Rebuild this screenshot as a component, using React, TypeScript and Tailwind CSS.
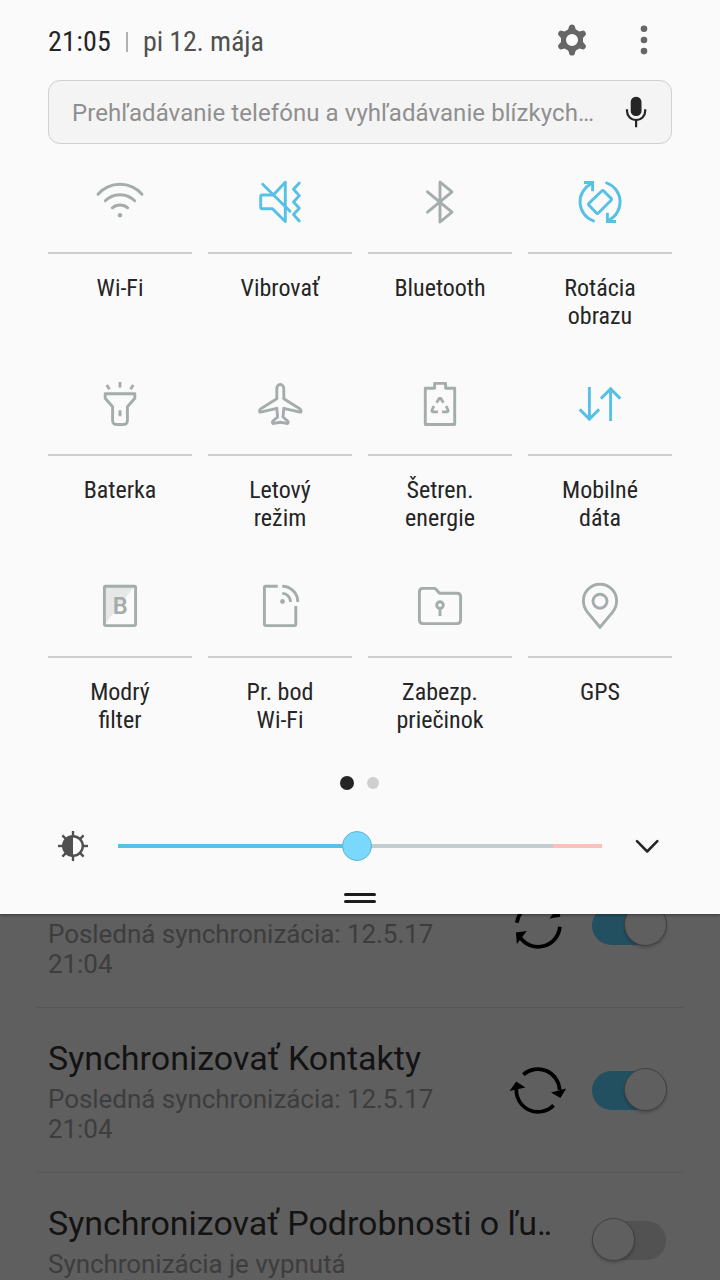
import React from "react";
import clsx from "clsx";

type Tile = {
  id: string;
  lines: string[];
  active?: boolean;
  icon: React.ReactNode;
};

type SyncRow = {
  id: string;
  title?: string;
  truncated?: boolean;
  status: string[];
  on: boolean;
  syncing?: boolean;
  turned?: boolean;
};

const tiles: Tile[] = [
  {
    id: "wifi",
    lines: ["Wi-Fi"],
    icon: (
      <>
        <path d="M2 16.3a29 29 0 0 1 44 0M9.3 22.7a21 21 0 0 1 29.4 0M16.3 29.9a11.5 11.5 0 0 1 15.4 0" />
        <circle cx="24" cy="37.3" r="2.2" fill="currentColor" stroke="none" />
      </>
    ),
  },
  {
    id: "vibrate",
    lines: ["Vibrovať"],
    active: true,
    icon: (
      <>
        <path d="M17.3 17H6.2Q4.7 17 4.7 18.5V29.2Q4.7 30.7 6.2 30.7H16.4L29.3 43.5V4.3L17.3 17" />
        <path d="M6.7 6.2L34 33.2" />
        <path d="M43.3 5L37.5 11.2L43.3 17.6L37.5 24L43.3 30.3L37.5 36.6L43.3 43" />
      </>
    ),
  },
  {
    id: "bluetooth",
    lines: ["Bluetooth"],
    icon: <path d="M11.5 13.8L36 34.2L24 44V4L36 13.8L11.5 34.2" />,
  },
  {
    id: "rotate",
    lines: ["Rotácia", "obrazu"],
    active: true,
    icon: (
      <>
        <path d="M17.6 43A20.2 20.2 0 0 1 15.3 5.8" />
        <path d="M30.7 5A20.2 20.2 0 0 1 32.7 42.2" />
        <path d="M8 4.5H16.6V13.3" strokeLinecap="butt" strokeLinejoin="miter" />
        <path d="M40 43.5H31.4V34.7" strokeLinecap="butt" strokeLinejoin="miter" />
        <path d="M12 4H17V9ZM36 44H31V39Z" fill="currentColor" stroke="none" />
        <path d="M27.7 13L35.1 20.4Q36 21.3 35.1 22.2L22.4 35Q21.4 36 20.4 35L13 27.2Q12.1 26.2 13 25.3L25.8 13Q26.8 12.1 27.7 13Z" />
      </>
    ),
  },
  {
    id: "torch",
    lines: ["Baterka"],
    icon: (
      <>
        <path d="M9.2 13.7H38.8V18.2L31.4 26.8V40.2Q31.4 44.5 27.1 44.5H20.9Q16.6 44.5 16.6 40.2V26.8L9.2 18.2Z" />
        <path d="M24 30.2V36.2M24 2V7.6M10.7 5L13.5 9.2M37.3 5L34.5 9.2" strokeLinecap="butt" />
      </>
    ),
  },
  {
    id: "airplane",
    lines: ["Letový", "režim"],
    icon: (
      <path d="M24.3 4.5C22.2 4.5 20.8 6.4 20.8 9V18.8L5.2 28.4C3.4 29.6 2.9 32.4 4.6 32.1L20.8 28.3L21.6 37L17.2 40.8C15.9 42 16.3 43.9 18 43.4L24.3 42.3L30.6 43.4C32.3 43.9 32.7 42 31.4 40.8L27 37L27.8 28.3L44 32.1C45.7 32.4 45.2 29.6 43.4 28.4L27.8 18.8V9C27.8 6.4 26.4 4.5 24.3 4.5Z" />
    ),
  },
  {
    id: "power",
    lines: ["Šetren.", "energie"],
    icon: (
      <>
        <path d="M9.3 8.3H18.6V3.4H29.6V8.3H38.7V44.5H9.3Z" />
        <path d="M20.6 22.8L23.1 18.5H24.9L27.4 22.8M30.1 26L32 30Q32.4 31.9 30.8 31.9H26M22 31.9H17.2Q15.6 31.9 16 30L17.9 26" strokeWidth="2.8" strokeLinecap="butt" />
      </>
    ),
  },
  {
    id: "data",
    lines: ["Mobilné", "dáta"],
    active: true,
    icon: (
      <path d="M13.4 7V39.3M3.7 29.4L13.4 39.1L23.1 29.4M34.6 41V8.7M24.9 18.6L34.6 8.9L44.3 18.6" strokeLinecap="butt" strokeLinejoin="miter" />
    ),
  },
  {
    id: "blue-filter",
    lines: ["Modrý", "filter"],
    icon: (
      <>
        <path d="M9 5H38L9 42Z" fill="#e6e8e8" stroke="none" />
        <rect x="8.4" y="4.2" width="31.2" height="39.4" rx="1" />
        <text x="24.3" y="32.2" fontSize="23.5" fontWeight="600" textAnchor="middle" fill="currentColor" stroke="none">B</text>
      </>
    ),
  },
  {
    id: "hotspot",
    lines: ["Pr. bod", "Wi-Fi"],
    icon: (
      <>
        <path d="M21.8 4.2H9.4Q8.4 4.2 8.4 5.2V42.6Q8.4 43.6 9.4 43.6H38.8Q39.8 43.6 39.8 42.6V24M26.3 4.2A15.6 15.6 0 0 1 41.8 20M26.3 11.4A8.4 8.4 0 0 1 34.6 20" strokeLinecap="butt" />
        <circle cx="26.5" cy="19.5" r="2.4" fill="currentColor" stroke="none" />
      </>
    ),
  },
  {
    id: "folder",
    lines: ["Zabezp.", "priečinok"],
    icon: (
      <>
        <path d="M7 6.4H18.3Q19.3 6.4 20 7.2L23.5 11.2H41Q44.6 11.2 44.6 14.8V38Q44.6 41.6 41 41.6H7Q3.4 41.6 3.4 38V10Q3.4 6.4 7 6.4Z" />
        <circle cx="24" cy="23.1" r="3.3" />
        <path d="M24 26.4V34" strokeLinecap="butt" />
      </>
    ),
  },
  {
    id: "gps",
    lines: ["GPS"],
    icon: (
      <>
        <path d="M24 45.2L11.4 30.2C8.9 27 7.4 23.5 7.4 18.8A16.6 16.6 0 0 1 40.6 18.8C40.6 23.5 39.1 27 36.6 30.2Z" strokeLinejoin="miter" />
        <circle cx="24" cy="19.2" r="7" />
      </>
    ),
  },
];

// the first row is scrolled under the panel, only its status stays visible
const syncRows: SyncRow[] = [
  {
    id: "scrolled",
    status: ["Posledná synchronizácia: 12.5.17", "21:04"],
    on: true,
    syncing: true,
    turned: true,
  },
  {
    id: "contacts",
    title: "Synchronizovať Kontakty",
    status: ["Posledná synchronizácia: 12.5.17", "21:04"],
    on: true,
    syncing: true,
  },
  {
    id: "people",
    title: "Synchronizovať Podrobnosti o ľu",
    truncated: true,
    status: ["Synchronizácia je vypnutá"],
    on: false,
  },
];

const gearTeeth = [0, 60, 120, 180, 240, 300];
const sunRays = [0, 45, 90, 135, 180, 225, 270, 315];

const Header: React.FC = () => (
  <header className="flex h-20 items-center pt-1 pr-[72px] pl-12">
    <div className="flex flex-1 items-center font-['Roboto_Condensed','Roboto',sans-serif] text-[28px] leading-none [font-stretch:75%]">
      <span className="w-[63px] tracking-[0.25px] text-[#252525]">21:05</span>
      <span className="mx-[15px] h-5 w-[2px] bg-[#b0b0b0]" />
      <span className="tracking-[-0.15px] text-[#505050]">pi 12. mája</span>
    </div>
    <svg viewBox="0 0 32 32" className="-mt-1 mr-[52px] size-8 text-[#666]">
      <circle cx="16" cy="16" r="8.5" fill="none" stroke="currentColor" strokeWidth="5" />
      {gearTeeth.map((deg) => (
        <path key={deg} d="M9.8 7.6Q12.6 6.4 13.1 2.6Q13.5 0.4 16 0.4T18.9 2.6Q19.4 6.4 22.2 7.6L20 9H12Z" fill="currentColor" transform={`rotate(${deg} 16 16)`} />
      ))}
    </svg>
    <svg viewBox="0 0 8 32" className="-mt-1 h-8 w-2 text-[#666]" fill="currentColor">
      <circle cx="4" cy="4.7" r="3.3" />
      <circle cx="4" cy="16" r="3.3" />
      <circle cx="4" cy="27.1" r="3.3" />
    </svg>
  </header>
);

const SearchBar: React.FC = () => (
  <div className="mx-12 flex h-16 items-center justify-between rounded-[12px] border border-[#d0d0d0] bg-[#f4f4f4] pr-[23px] pl-[23px]">
    <span className="pt-px text-[24px] tracking-[0.07px] whitespace-nowrap text-[#8f8f8f]">Prehľadávanie telefónu a vyhľadávanie blízkych…</span>
    <svg viewBox="0 0 24 32" className="h-8 w-6 shrink-0 text-[#252525]" fill="none" stroke="currentColor" strokeWidth="2.2">
      <rect x="6.7" y="0.7" width="10.8" height="19.4" rx="5.2" fill="currentColor" stroke="none" />
      <path d="M3 13.3V15A9.1 9.1 0 0 0 21.2 15V13.3M12.1 24V31.3" />
    </svg>
  </div>
);

const QuickTile: React.FC<{ tile: Tile }> = ({ tile }) => (
  <div className="flex h-[202px] flex-col">
    <div className="flex h-[102px] items-center justify-center border-b-2 border-[#cdcdcd]">
      <svg
        viewBox="0 0 48 48"
        className={clsx("size-12 overflow-visible", tile.active ? "text-[#56c0e5]" : "text-[#a5acac]")}
        fill="none"
        stroke="currentColor"
        strokeWidth="2.9"
        strokeLinecap="round"
        strokeLinejoin="round"
      >
        {tile.icon}
      </svg>
    </div>
    <div className="mt-5 text-center font-['Roboto_Condensed','Roboto',sans-serif] text-[24px] leading-7 text-[#252525] [font-stretch:75%]">
      {tile.lines.map((line) => (
        <div key={line}>{line}</div>
      ))}
    </div>
  </div>
);

const Brightness: React.FC = () => (
  <div className="mt-10 flex h-8 items-center pr-[61px] pl-[57px]">
    <svg viewBox="0 0 32 32" className="size-8 text-[#505050]" fill="none" stroke="currentColor" strokeWidth="2.4">
      <circle cx="16" cy="16" r="9.8" />
      <path d="M16 6A10 10 0 0 0 16 26Z" fill="currentColor" stroke="none" />
      {sunRays.map((deg) => (
        <path key={deg} d="M16 1V6.5" transform={`rotate(${deg} 16 16)`} />
      ))}
    </svg>
    <div className="relative mr-[33px] ml-[29px] flex h-1 flex-1">
      <div className="w-[239px] bg-[#56c0e5]" />
      <div className="flex-1 bg-[#c3cdcf]" />
      <div className="w-[49px] bg-[#f9c0bc]" />
      <div className="absolute top-1/2 left-[239px] size-[30px] -translate-x-1/2 -translate-y-1/2 rounded-full border border-[#5fb4d3] bg-[#79d8fb]" />
    </div>
    <svg viewBox="0 0 24 16" className="h-4 w-6 text-[#252525]" fill="none" stroke="currentColor" strokeWidth="2.5" strokeLinecap="round" strokeLinejoin="round">
      <path d="M2 3.2L12.2 13.5L22.3 3.2" />
    </svg>
  </div>
);

const Toggle: React.FC<{ on: boolean }> = ({ on }) => (
  <div className={clsx("flex h-[39px] w-[74px] items-center rounded-full", on ? "justify-end bg-[#235060]" : "justify-start bg-[#525252]")}>
    <div className={clsx("-mt-px size-[43px] shrink-0 rounded-full border border-[#404040] bg-[#5f5f5f] shadow-[0_2px_3px_rgba(0,0,0,0.2)]", on && "-mr-px")} />
  </div>
);

const SyncIcon: React.FC<{ turned?: boolean }> = ({ turned }) => (
  <svg viewBox="0 0 60 60" className={clsx("size-[60px] text-black", turned && "-rotate-[40deg]")} fill="none" stroke="currentColor" strokeWidth="3.7">
    <path d="M15.3 14.6A21.8 21.8 0 0 1 51.6 30M45.6 45.4A21.8 21.8 0 0 1 8.4 28" />
    <path d="M58.2 28.6L52.4 38L43 32.5ZM1.6 31L8.2 21.6L17.4 27.4Z" fill="currentColor" stroke="none" />
  </svg>
);

const SyncItem: React.FC<{ row: SyncRow }> = ({ row }) => (
  <div className={clsx("mx-9 flex shrink-0 items-center border-b border-[#575757] pr-[18px] pl-3", row.status.length > 1 ? "h-[165px]" : "h-[135px]")}>
    <div className="flex h-full flex-1 flex-col pt-[30px]">
      <div className="h-10 text-[34px] leading-[40px] whitespace-nowrap text-[#131313]">
        <span className={clsx(row.truncated && "tracking-[-0.04px]")}>{row.title}</span>
        {row.truncated ? <span className="tracking-[-2.5px]">..</span> : null}
      </div>
      <div className="mt-[6px] text-[26px] leading-[30px] tracking-[-0.05px] whitespace-nowrap text-[#3d3d3d]">
        {row.status.map((line) => (
          <div key={line}>{line}</div>
        ))}
      </div>
    </div>
    {row.syncing ? (
      <div className="mr-6">
        <SyncIcon turned={row.turned} />
      </div>
    ) : null}
    <Toggle on={row.on} />
  </div>
);

const App: React.FC = () => {
  return (
    <div className="flex h-[1280px] w-[720px] flex-col overflow-hidden bg-[#5f5f5f] font-['Roboto',sans-serif]">
      <section className="z-10 flex h-[914px] shrink-0 flex-col bg-[#fafafa] shadow-[0_1px_3px_rgba(0,0,0,0.4)]">
        <Header />
        <SearchBar />
        <div className="mx-12 mt-2 grid grid-cols-4 gap-x-4">
          {tiles.map((tile) => (
            <QuickTile key={tile.id} tile={tile} />
          ))}
        </div>
        <div className="mt-[18px] flex h-[14px] items-center justify-center gap-[13px] pr-[2px]">
          <span className="size-[14px] rounded-full bg-[#252525]" />
          <span className="size-3 rounded-full bg-[#cfcfcf]" />
        </div>
        <Brightness />
        <div className="mt-[31px] flex flex-col items-center gap-1">
          <span className="h-[3px] w-8 rounded-full bg-[#1c1c1c]" />
          <span className="h-[3px] w-8 rounded-full bg-[#1c1c1c]" />
        </div>
      </section>
      <section className="flex flex-1 flex-col overflow-hidden">
        <div className="-mt-[71px] flex flex-col">
          {syncRows.map((row) => (
            <SyncItem key={row.id} row={row} />
          ))}
        </div>
      </section>
    </div>
  );
};

export default App;
